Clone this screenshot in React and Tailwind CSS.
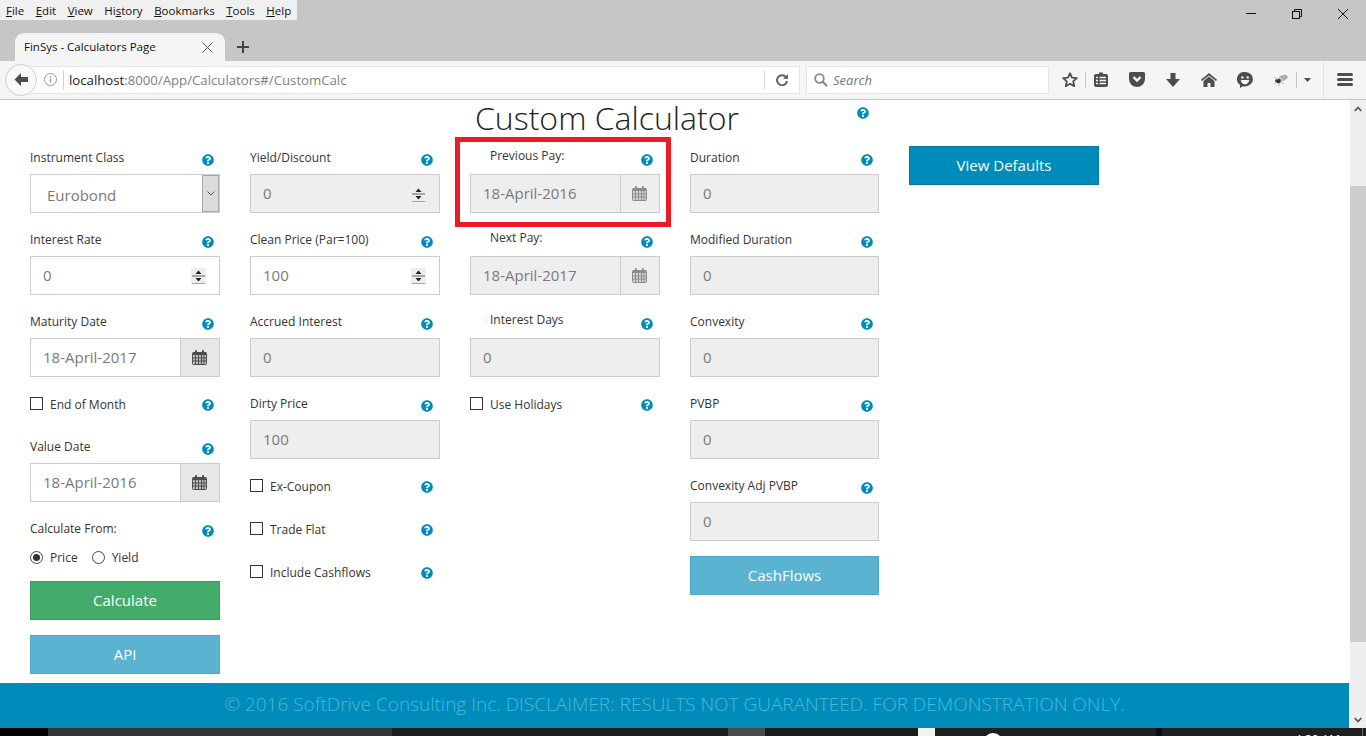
import React from "react";
import { FaQuestionCircle } from "react-icons/fa";

const Help = ({ cls = "" }) => <FaQuestionCircle className={`w-[12px] h-[12px] text-[#008cba] shrink-0 ${cls}`} />;

const Spinner = () => (
  <svg width="15" height="16" viewBox="0 0 15 16" className="shrink-0">
    <rect x="0" y="0" width="15" height="16" fill="#eeeeee" />
    <rect x="1" y="7" width="13" height="2" fill="#a6a6a6" />
    <rect x="1" y="15" width="13" height="1" fill="#a6a6a6" />
    <path d="M7.5 2.5 L10.5 6 L4.5 6 Z" fill="#222" />
    <path d="M4.5 10 L10.5 10 L7.5 13.5 Z" fill="#222" />
  </svg>
);

const Calendar = ({ c }) => (
  <svg width="15" height="15" viewBox="0 0 15 15" fill="none">
    <rect x="0.5" y="2.5" width="14" height="12" rx="1" fill={c} opacity="0.25" />
    <rect x="0.5" y="2.5" width="14" height="12" rx="1" stroke={c} />
    <rect x="1" y="2" width="13" height="3" fill={c} />
    <rect x="3" y="0" width="2" height="4" rx="1" fill={c} />
    <rect x="10" y="0" width="2" height="4" rx="1" fill={c} />
    <path d="M0.5 8h14M0.5 11h14M3.5 5v9M6.5 5v9M9.5 5v9M12 5v9" stroke={c} />
  </svg>
);

const Label = ({ text, indent, right = "pr-[7px]" }) => (
  <div className={`h-[28px] flex items-start justify-between ${right}`}>
    <span className={`text-[12px] leading-[16px] text-[#333] ${indent ? "pl-[20px] mt-[2px]" : "mt-[4px]"}`}>{text}</span>
    <Help cls="mt-[8px]" />
  </div>
);

const Box = ({ value, disabled, spin }) => (
  <div className={`h-[39px] border border-[#cccccc] flex items-center justify-between pl-[12px] pr-[13px] text-[15px] text-[#7a7a7a] ${disabled ? "bg-[#eeeeee]" : "bg-white"}`}>
    <span>{value}</span>
    {spin && <Spinner />}
  </div>
);

const DateBox = ({ value, disabled }) => (
  <div className={`h-[39px] border border-[#cccccc] flex text-[15px] text-[#7a7a7a] ${disabled ? "bg-[#eeeeee]" : "bg-white"}`}>
    <span className="flex-1 flex items-center pl-[12px]">{value}</span>
    <span className={`w-[39px] border-l border-[#cccccc] flex items-center justify-center pr-[2px] ${disabled ? "bg-[#eeeeee]" : "bg-[#e7e7e7]"}`}>
      <Calendar c={disabled ? "#8c8c8c" : "#4d4d4d"} />
    </span>
  </div>
);

const Field = ({ label, children, indent, right }) => (
  <div className="h-[82px]">
    <Label text={label} indent={indent} right={right} />
    {children}
  </div>
);

const Check = ({ label, right = "pr-[7px]" }) => (
  <div className={`h-[43px] flex items-start ${right}`}>
    <span className="w-[13px] h-[13px] border border-[#333] bg-white mt-[5px] shrink-0" />
    <span className="text-[12px] leading-[16px] text-[#333] ml-[7px] mt-[5px] flex-1">{label}</span>
    <Help cls="mt-[7px]" />
  </div>
);

const Btn = ({ children, cls }) => (
  <div className={`h-[39px] border flex items-center justify-center text-white text-[15px] ${cls}`}>{children}</div>
);

const Radio = ({ on }) => (
  <span className="w-[13px] h-[13px] rounded-full border border-[#444] bg-white flex items-center justify-center shrink-0">
    {on && <span className="w-[7px] h-[7px] rounded-full bg-[#333]" />}
  </span>
);

const Menu = () => {
  const items = [["F", "ile"], ["E", "dit"], ["V", "iew"], ["Hi", "s", "tory"], ["B", "ookmarks"], ["T", "ools"], ["H", "elp"]];
  return (
    <div className="w-[297px] h-[20px] bg-[#f0f0f0] flex items-center pl-[6px] pt-[1px] gap-[11.5px] text-[11.5px] text-[#111]">
      {items.map((it, i) => (
        <span key={i}>
          {it.length === 3 ? <>{it[0]}<u>{it[1]}</u>{it[2]}</> : <><u>{it[0]}</u>{it[1]}</>}
        </span>
      ))}
    </div>
  );
};

const WinControls = () => (
  <div className="flex items-start gap-[36px] pr-[18px] pt-[9px]">
    <svg width="10" height="10" viewBox="0 0 10 10"><path d="M0 4.5h10" stroke="#111" /></svg>
    <svg width="10" height="10" viewBox="0 0 10 10" fill="none"><path d="M2.5 2.5V.5h7v7h-2" stroke="#111" /><rect x="0.5" y="2.5" width="7" height="7" stroke="#111" fill="#c6c6c6" /></svg>
    <svg width="10" height="10" viewBox="0 0 10 10"><path d="M0 0l10 10M10 0L0 10" stroke="#111" /></svg>
  </div>
);

const Tab = () => (
  <div className="flex items-center h-[28px] pl-[15px]">
    <div className="w-[210px] h-[28px] bg-[#f5f5f5] rounded-t-[9px] flex items-center pl-[9px] pr-[12px] justify-between text-[11.5px] text-[#111]">
      <span>FinSys - Calculators Page</span>
      <svg width="11" height="11" viewBox="0 0 11 11"><path d="M.5.5l10 10M10.5.5l-10 10" stroke="#555" /></svg>
    </div>
    <svg width="12" height="12" viewBox="0 0 12 12" className="ml-[12px]"><path d="M6 0v12M0 6h12" stroke="#444" strokeWidth="2" /></svg>
  </div>
);

const dk = "#4d4d4d";
const Sep = ({ cls = "" }) => <span className={`w-px h-[16px] bg-[#c8c8c8] shrink-0 ${cls}`} />;

const NavBar = () => (
  <div className="h-[39px] bg-[#f5f5f5] border-b border-[#c4c4c4] flex items-center pl-[5px] pb-[1px] shrink-0">
    <div className="relative z-10 w-[32px] h-[32px] rounded-full bg-[#f9f9f9] border border-[#cfcfcf] flex items-center justify-center shrink-0">
      <svg width="14" height="13" viewBox="0 0 14 13"><path d="M7 0L0.5 6.5L7 13V9h7V4H7Z" fill={dk} /></svg>
    </div>
    <div className="-ml-[8px] w-[771px] h-[28px] bg-white border border-[#e6e6e6] flex items-center pl-[14px] text-[13.2px] shrink-0">
      <svg width="13" height="13" viewBox="0 0 13 13" fill="none" className="shrink-0"><circle cx="6.5" cy="6.5" r="6" stroke="#9a9a9a" /><path d="M6.5 5.5v4M6.5 3v1.5" stroke="#9a9a9a" strokeWidth="1.4" /></svg>
      <span className="w-px h-[20px] bg-[#cfcfcf] ml-[6px] shrink-0" />
      <span className="ml-[5px] pt-[2px] flex-1 text-[#808080]"><span className="text-[#1a1a1a]">localhost</span>:8000/App/Calculators#/CustomCalc</span>
      <span className="w-px h-[20px] bg-[#dcdcdc] shrink-0" />
      <span className="w-[34px] flex justify-center">
        <svg width="12" height="12" viewBox="0 0 12 12" fill="none"><path d="M10 3.2A5 5 0 1 0 11 7" stroke="#666" strokeWidth="2" /><path d="M12 0v5H7Z" fill="#666" /></svg>
      </span>
    </div>
    <div className="ml-[6px] w-[243px] h-[28px] bg-white border border-[#e6e6e6] flex items-center pl-[7px] gap-[5px] text-[13px] italic text-[#777] shrink-0">
      <svg width="14" height="14" viewBox="0 0 14 14" fill="none"><circle cx="5.5" cy="5.5" r="4.3" stroke="#888" strokeWidth="1.8" /><path d="M8.5 8.5L13 13" stroke="#888" strokeWidth="2.2" /></svg>
      <span className="pt-[2px]">Search</span>
    </div>
    <svg width="16" height="16" viewBox="0 0 16 16" fill="none" className="ml-[13px] shrink-0"><path d="M8 1.3l2 4.4 4.8.5-3.6 3.2 1 4.8L8 11.8l-4.2 2.4 1-4.8L1.2 6.2 6 5.7Z" stroke={dk} strokeWidth="1.8" strokeLinejoin="round" /></svg>
    <Sep cls="ml-[7px]" />
    <svg width="14" height="15" viewBox="0 0 14 15" className="ml-[8px] shrink-0"><path d="M2 2h3V0.5h4V2h3a2 2 0 0 1 2 2v9a2 2 0 0 1-2 2H2a2 2 0 0 1-2-2V4a2 2 0 0 1 2-2Z" fill={dk} /><path d="M2 5.5h2M2 8.5h2M2 11.5h2M5.5 5.5h6.5M5.5 8.5h6.5M5.5 11.5h6.5" stroke="#f5f5f5" strokeWidth="1.4" /></svg>
    <svg width="16" height="15" viewBox="0 0 16 15" className="ml-[21px] shrink-0"><path d="M1.5 0h13A1.5 1.5 0 0 1 16 1.5V7A8 8 0 0 1 0 7V1.5A1.5 1.5 0 0 1 1.5 0Z" fill={dk} /><path d="M4.5 5L8 8.5 11.5 5" stroke="#f5f5f5" strokeWidth="2.4" fill="none" /></svg>
    <svg width="14" height="14" viewBox="0 0 14 14" className="ml-[21px] shrink-0"><path d="M4.5 0h5v6H14L7 14 0 6h4.5Z" fill={dk} /></svg>
    <svg width="16" height="14" viewBox="0 0 16 14" className="ml-[21px] shrink-0"><path d="M8 0L16 6.8 15 8 8 2.4 1 8 0 6.8Z" fill={dk} /><path d="M2.5 8L8 3.6 13.5 8v6H9.5V10h-3v4h-4Z" fill={dk} /></svg>
    <svg width="16" height="16" viewBox="0 0 16 16" className="ml-[20px] shrink-0"><path d="M8 0a8 7.2 0 0 1 0 14.4c-.7 0-1.4-.1-2-.2L3 16v-3A7.2 7.2 0 0 1 8 0Z" fill={dk} /><circle cx="5.3" cy="5.4" r="1.2" fill="#f5f5f5" /><circle cx="10.7" cy="5.4" r="1.2" fill="#f5f5f5" /><path d="M3.8 8h8.4a4.2 4.2 0 0 1-8.4 0Z" fill="#f5f5f5" /></svg>
    <svg width="16" height="14" viewBox="0 0 16 14" className="ml-[20px] shrink-0"><ellipse cx="10" cy="5" rx="5" ry="3" fill="#bdbdbd" transform="rotate(-20 10 5)" /><path d="M8 3l4 3M11 2l3 3" stroke="#777" strokeWidth="0.8" /><ellipse cx="5" cy="8" rx="2.8" ry="2.2" fill="#333" /><path d="M1 4l4 3M1 11l3-2M6 13l0-3M11 11l-3-2" stroke="#b5b5b5" strokeWidth="0.9" /></svg>
    <Sep cls="ml-[7px]" />
    <svg width="7" height="4" viewBox="0 0 7 4" className="ml-[7px] shrink-0"><path d="M0 0h7L3.5 4Z" fill={dk} /></svg>
    <span className="w-px h-[36px] bg-[#e2e2e2] ml-[12px] shrink-0" />
    <span className="ml-[13px] w-[16px] flex flex-col gap-[2px] shrink-0">
      <span className="h-[3px] rounded-full bg-[#4d4d4d]" />
      <span className="h-[3px] rounded-full bg-[#4d4d4d]" />
      <span className="h-[3px] rounded-full bg-[#4d4d4d]" />
    </span>
  </div>
);

const ScrollBar = () => (
  <div className="w-[16px] bg-[#efefef] flex flex-col items-center shrink-0">
    <svg width="8" height="6" viewBox="0 0 8 6" className="mt-[6px]"><path d="M.7 5L4 1.5 7.3 5" stroke="#555" strokeWidth="1.8" fill="none" /></svg>
    <div className="w-full h-[456px] bg-[#cdcdcd] mt-[74px]" />
    <div className="flex-1" />
    <svg width="8" height="6" viewBox="0 0 8 6" className="mb-[5px]"><path d="M.7 1L4 4.5 7.3 1" stroke="#555" strokeWidth="1.8" fill="none" /></svg>
  </div>
);

const Form = () => (
  <div className="flex-1 min-h-0">
    <div className="h-[46px] flex items-start">
      <h1 className="ml-[475px] w-[382px] text-[32px] leading-[36px] text-[#222] font-light">Custom Calculator</h1>
      <Help cls="mt-[7px]" />
    </div>
    <div className="flex gap-[30px] pl-[30px]">
      <div className="w-[190px]">
        <div className="h-[82px]">
          <Label text="Instrument Class" right="pr-[6px]" />
          <div className="h-[39px] border border-[#cccccc] flex bg-white text-[15px] text-[#7a7a7a]">
            <span className="flex-1 flex items-center pl-[16px] pt-[3px]">Eurobond</span>
            <span className="w-[17px] bg-[#dcdcdc] border border-[#a8a8a8] flex items-center justify-center">
              <svg width="8" height="5" viewBox="0 0 8 5"><path d="M.5.5L4 4 7.5.5" stroke="#555" fill="none" /></svg>
            </span>
          </div>
        </div>
        <Field label="Interest Rate" right="pr-[6px]"><Box value="0" spin /></Field>
        <Field label="Maturity Date" right="pr-[6px]"><DateBox value="18-April-2017" /></Field>
        <Check label="End of Month" right="pr-[6px]" />
        <Field label="Value Date" right="pr-[6px]"><DateBox value="18-April-2016" /></Field>
        <div className="h-[33px] flex items-start justify-between pr-[6px]">
          <span className="text-[12px] leading-[16px] text-[#333] mt-[4px]">Calculate From:</span>
          <Help cls="mt-[8px]" />
        </div>
        <div className="h-[14px] flex items-center text-[12px] text-[#333]">
          <Radio on /><span className="ml-[7px] pt-[2px]">Price</span>
          <span className="ml-[14px]"><Radio /></span><span className="ml-[7px] pt-[2px]">Yield</span>
        </div>
        <div className="mt-[17px] flex flex-col gap-[15px]">
          <Btn cls="bg-[#43ac6a] border-[#3a9d5d]">Calculate</Btn>
          <Btn cls="bg-[#5bb3d2] border-[#50a8c8]">API</Btn>
        </div>
      </div>
      <div className="w-[190px]">
        <Field label="Yield/Discount"><Box value="0" disabled spin /></Field>
        <Field label="Clean Price (Par=100)"><Box value="100" spin /></Field>
        <Field label="Accrued Interest"><Box value="0" disabled /></Field>
        <Field label="Dirty Price"><Box value="100" disabled /></Field>
        <Check label="Ex-Coupon" />
        <Check label="Trade Flat" />
        <Check label="Include Cashflows" />
      </div>
      <div className="w-[190px]">
        <div className="relative">
          <Field label="Previous Pay:" indent><DateBox value="18-April-2016" disabled /></Field>
          <div className="absolute -left-[15px] -top-[9px] w-[216px] h-[90px] border-[5px] border-[#ed1c24] pointer-events-none" />
        </div>
        <Field label="Next Pay:" indent><DateBox value="18-April-2017" disabled /></Field>
        <Field label="Interest Days" indent><Box value="0" disabled /></Field>
        <Check label="Use Holidays" />
      </div>
      <div className="w-[189px]">
        <Field label="Duration" right="pr-[6px]"><Box value="0" disabled /></Field>
        <Field label="Modified Duration" right="pr-[6px]"><Box value="0" disabled /></Field>
        <Field label="Convexity" right="pr-[6px]"><Box value="0" disabled /></Field>
        <Field label="PVBP" right="pr-[6px]"><Box value="0" disabled /></Field>
        <Field label="Convexity Adj PVBP" right="pr-[6px]"><Box value="0" disabled /></Field>
        <Btn cls="bg-[#5bb3d2] border-[#50a8c8]">CashFlows</Btn>
      </div>
      <div className="w-[190px]">
        <Btn cls="bg-[#008cba] border-[#007ba4]">View Defaults</Btn>
      </div>
    </div>
  </div>
);

const Taskbar = () => (
  <div className="h-[8px] flex bg-[#1f1f1f] overflow-hidden shrink-0">
    <div className="w-[48px] bg-black" />
    <div className="w-[344px] bg-[#333333]" />
    <div className="w-[336px] bg-[#1e1e1e]" />
    <div className="w-[37px] bg-[#4a4a4a]" />
    <div className="w-[153px] bg-[#1b1b1b]" />
    <div className="w-[17px] bg-[#f2f2f2]" />
    <div className="w-[48px]" />
    <div className="w-[20px] h-[20px] rounded-full bg-[#2f8f6a] border-[3px] border-white mt-[5px]" />
    <div className="w-[153px]" />
    <div className="w-[6px] bg-[#0a0a14]" />
    <div className="w-[200px] text-[12px] leading-[14px] text-white text-right pr-[22px] pt-[5px]">4:20 AM</div>
    <div className="w-px bg-[#666]" />
  </div>
);

export default function App() {
  return (
    <div className="w-[1366px] h-[736px] overflow-hidden flex flex-col bg-white text-[#333]" style={{ fontFamily: '"Open Sans", "Noto Sans", sans-serif' }}>
      <div className="h-[61px] bg-[#c6c6c6] flex flex-col justify-between shrink-0">
        <div className="flex justify-between items-start">
          <Menu />
          <WinControls />
        </div>
        <Tab />
      </div>
      <NavBar />
      <div className="flex-1 min-h-0 flex">
        <div className="w-[1349px] flex flex-col">
          <Form />
          <div className="h-[45px] bg-[#008cba] flex items-center justify-center pb-[2px] text-[19px] font-light text-[#4ab8dc] shrink-0">
            © 2016 SoftDrive Consulting Inc. DISCLAIMER: RESULTS NOT GUARANTEED. FOR DEMONSTRATION ONLY.
          </div>
        </div>
        <div className="w-px bg-white" />
        <ScrollBar />
      </div>
      <Taskbar />
    </div>
  );
}
